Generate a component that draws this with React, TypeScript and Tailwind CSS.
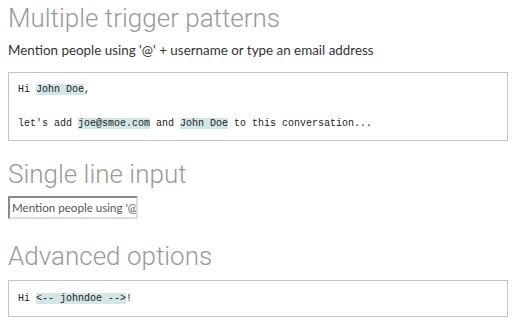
function Mention({ children }: { children: React.ReactNode }) {
  return <span className="bg-[#d1e7e6]">{children}</span>;
}

function Heading({ children }: { children: React.ReactNode }) {
  return (
    <h2 className="font-['Roboto',sans-serif] font-light text-[26px] leading-[32px] text-[#9a9a9a] whitespace-nowrap">
      {children}
    </h2>
  );
}

export default function App() {
  return (
    <div className="w-[517px] h-[330px] bg-white px-2 pt-[2px] flex flex-col overflow-hidden">
      <Heading>Multiple trigger patterns</Heading>
      <p className="mt-[6px] font-['Lato',sans-serif] text-[13.4px] leading-[20px] text-[#333]">
        Mention people using '@' + username or type an email address
      </p>
      <div className="mt-3 w-[500px] border border-[#c4c4c4] pl-[9px] py-2 font-['Liberation_Mono',monospace] text-[10px] leading-[17px] text-[#222] whitespace-pre">
        <div>
          Hi <Mention>John Doe</Mention>,
        </div>
        <div>&nbsp;</div>
        <div>
          let's add <Mention>joe@smoe.com</Mention> and <Mention>John Doe</Mention> to this conversation...
        </div>
      </div>
      <div className="mt-[17px]">
        <Heading>Single line input</Heading>
      </div>
      <input
        type="text"
        placeholder="Mention people using '@' + username"
        className="mt-[6px] w-[130px] h-[23px] border-2 border-t-[#8a8a8a] border-l-[#8a8a8a] border-r-[#dcdcdc] border-b-[#dcdcdc] pl-[2px] pr-0 font-['Lato',sans-serif] text-[11.6px] text-[#333] placeholder:text-[#555] outline-none"
      />
      <div className="mt-[21px]">
        <Heading>Advanced options</Heading>
      </div>
      <div className="mt-2 w-[500px] border border-[#c4c4c4] pl-[9px] py-[9px] font-['Liberation_Mono',monospace] text-[10px] leading-[17px] text-[#222] whitespace-pre">
        Hi <Mention>{'<-- johndoe -->'}</Mention>!
      </div>
    </div>
  );
}
